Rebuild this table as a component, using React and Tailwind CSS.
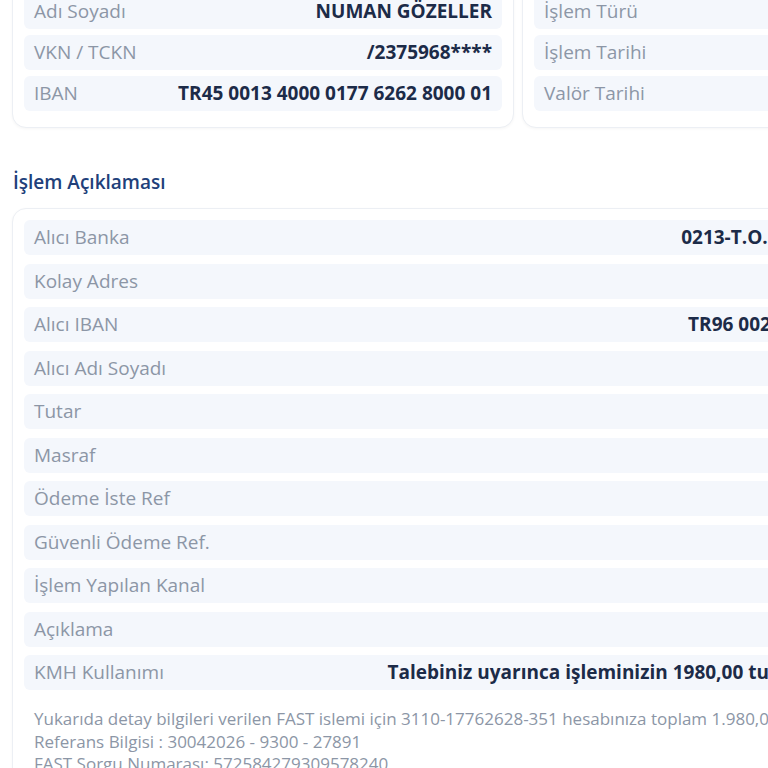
import React from "react";

const topLeft = [
  ["Adı Soyadı", "NUMAN GÖZELLER"],
  ["VKN / TCKN", "/2375968****"],
  ["IBAN", "TR45 0013 4000 0177 6262 8000 01"],
];
const topRight = [
  ["İşlem Türü", ""],
  ["İşlem Tarihi", ""],
  ["Valör Tarihi", ""],
];
const rows = [
  ["Alıcı Banka", "0213-T.O.M. KATILIM BANKASI A.Ş."],
  ["Kolay Adres", ""],
  ["Alıcı IBAN", "TR96 0020 9000 0013 1567 2000 01"],
  ["Alıcı Adı Soyadı", ""],
  ["Tutar", ""],
  ["Masraf", ""],
  ["Ödeme İste Ref", ""],
  ["Güvenli Ödeme Ref.", ""],
  ["İşlem Yapılan Kanal", ""],
  ["Açıklama", ""],
  ["KMH Kullanımı", "Talebiniz uyarınca işleminizin 1980,00 tutarı KMH ile karşılanmış."],
];

function Row({ label, value }) {
  return (
    <div className="flex h-[35px] items-center justify-between rounded-[6px] bg-[#f4f7fc] px-[10px]">
      <span className="whitespace-nowrap text-[19px] text-[#8c96a6]">{label}</span>
      {value ? (
        <span className="whitespace-nowrap text-[19px] font-bold text-[#1c2b48]">{value}</span>
      ) : null}
    </div>
  );
}

export default function App() {
  return (
    <div
      className="h-[768px] w-[768px] overflow-hidden bg-white"
      style={{ fontFamily: '"Open Sans", "Noto Sans", sans-serif' }}
    >
      <div className="mt-[-18px] w-[1036px] px-[12px]">
        <div className="grid grid-cols-2 gap-[8px]">
          <div className="flex flex-col gap-[6px] rounded-[14px] border border-[#eceff4] bg-white px-[11px] pb-[16px] pt-[11px] shadow-[0_1px_3px_rgba(0,0,0,0.04)]">
            {topLeft.map(([l, v]) => (
              <Row key={l} label={l} value={v} />
            ))}
          </div>
          <div className="flex flex-col gap-[6px] rounded-[14px] border border-[#eceff4] bg-white px-[11px] pb-[16px] pt-[11px] shadow-[0_1px_3px_rgba(0,0,0,0.04)]">
            {topRight.map(([l, v]) => (
              <Row key={l} label={l} value={v} />
            ))}
          </div>
        </div>

        <h2 className="mt-[41px] pl-[1px] text-[19px] font-semibold leading-[26px] text-[#21407a]">
          İşlem Açıklaması
        </h2>

        <div className="mt-[13px] rounded-[14px] border border-[#eceff4] bg-white px-[11px] pt-[11px] pb-[20px] shadow-[0_1px_3px_rgba(0,0,0,0.04)]">
          <div className="flex flex-col gap-[8.5px]">
            {rows.map(([l, v]) => (
              <Row key={l} label={l} value={v} />
            ))}
          </div>
          <div className="mt-[18px] px-[10px] text-[17px] leading-[22.5px] text-[#8c96a6]">
            <div className="whitespace-nowrap">
              Yukarıda detay bilgileri verilen FAST islemi için 3110-17762628-351 hesabınıza toplam 1.980,00 TL tutarında işlem yapılmıştır.
            </div>
            <div className="whitespace-nowrap">Referans Bilgisi : 30042026 - 9300 - 27891</div>
            <div className="whitespace-nowrap">FAST Sorgu Numarası: 572584279309578240</div>
          </div>
        </div>
      </div>
    </div>
  );
}
